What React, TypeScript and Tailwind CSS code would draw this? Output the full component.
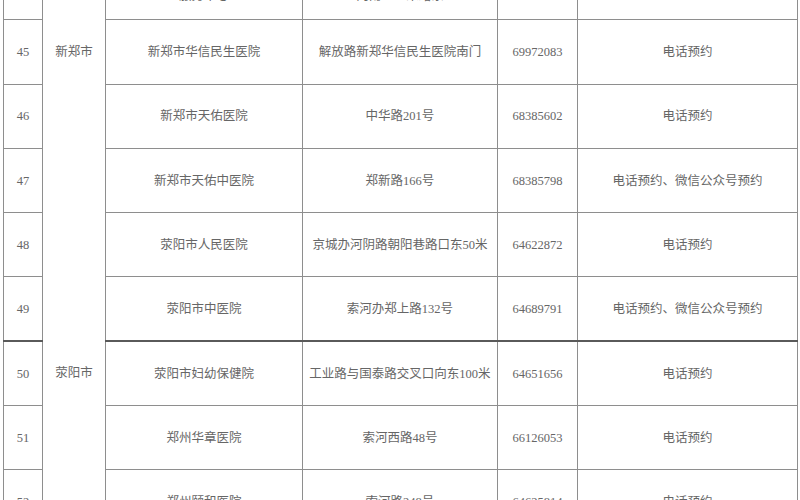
import React from 'react';

type Row = {
  no: string;
  city?: string;
  name: React.ReactNode;
  addr: React.ReactNode;
  phone: string;
  way: React.ReactNode;
  heavyTop?: boolean;
};

const rows: Row[] = [
  {
    no: '44',
    name: <>新郑市新华路社区卫生<br />服务中心</>,
    addr: <>新郑市新华路与人民路交叉口<br />向南2000米路东</>,
    phone: '62697120',
    way: <>电话预约、微信公众号预约<br />&nbsp;</>,
  },
  { no: '45', city: '新郑市', name: '新郑市华信民生医院', addr: '解放路新郑华信民生医院南门', phone: '69972083', way: '电话预约' },
  { no: '46', name: '新郑市天佑医院', addr: '中华路201号', phone: '68385602', way: '电话预约' },
  { no: '47', name: '新郑市天佑中医院', addr: '郑新路166号', phone: '68385798', way: '电话预约、微信公众号预约' },
  { no: '48', name: '荥阳市人民医院', addr: '京城办河阴路朝阳巷路口东50米', phone: '64622872', way: '电话预约' },
  { no: '49', name: '荥阳市中医院', addr: '索河办郑上路132号', phone: '64689791', way: '电话预约、微信公众号预约' },
  { no: '50', city: '荥阳市', name: '荥阳市妇幼保健院', addr: '工业路与国泰路交叉口向东100米', phone: '64651656', way: '电话预约', heavyTop: true },
  { no: '51', name: '郑州华章医院', addr: '索河西路48号', phone: '66126053', way: '电话预约' },
  { no: '52', name: '郑州颐和医院', addr: '索河路248号', phone: '64625814', way: '电话预约' },
];

export default function App() {
  const cell = 'border border-[#8e8e8e] text-center align-middle';
  const heavy = 'border-t-2 border-t-[#5a5a5a]';

  return (
    <div
      className="w-[800px] h-[500px] overflow-hidden bg-white text-[#666] text-[12.5px] leading-[16px]"
      style={{ fontFamily: "'Liberation Serif', 'Noto Sans CJK SC', serif" }}
    >
      <table className="table-fixed border-collapse ml-[3px] -mt-[45px] w-[794px]">
        <colgroup>
          <col className="w-[39px]" />
          <col className="w-[63px]" />
          <col className="w-[197px]" />
          <col className="w-[195px]" />
          <col className="w-[80px]" />
          <col className="w-[220px]" />
        </colgroup>
        <tbody>
          {rows.map((r) => (
            <tr key={r.no} className="h-[64.3px]">
              <td className={`${cell} ${r.heavyTop ? heavy : ''}`}>{r.no}</td>
              <td className="border-x border-[#8e8e8e] text-center align-middle">{r.city}</td>
              <td className={`${cell} ${r.heavyTop ? heavy : ''}`}>{r.name}</td>
              <td className={`${cell} ${r.heavyTop ? heavy : ''}`}>{r.addr}</td>
              <td className={`${cell} ${r.heavyTop ? heavy : ''}`}>{r.phone}</td>
              <td className={`${cell} ${r.heavyTop ? heavy : ''}`}>{r.way}</td>
            </tr>
          ))}
        </tbody>
      </table>
    </div>
  );
}
